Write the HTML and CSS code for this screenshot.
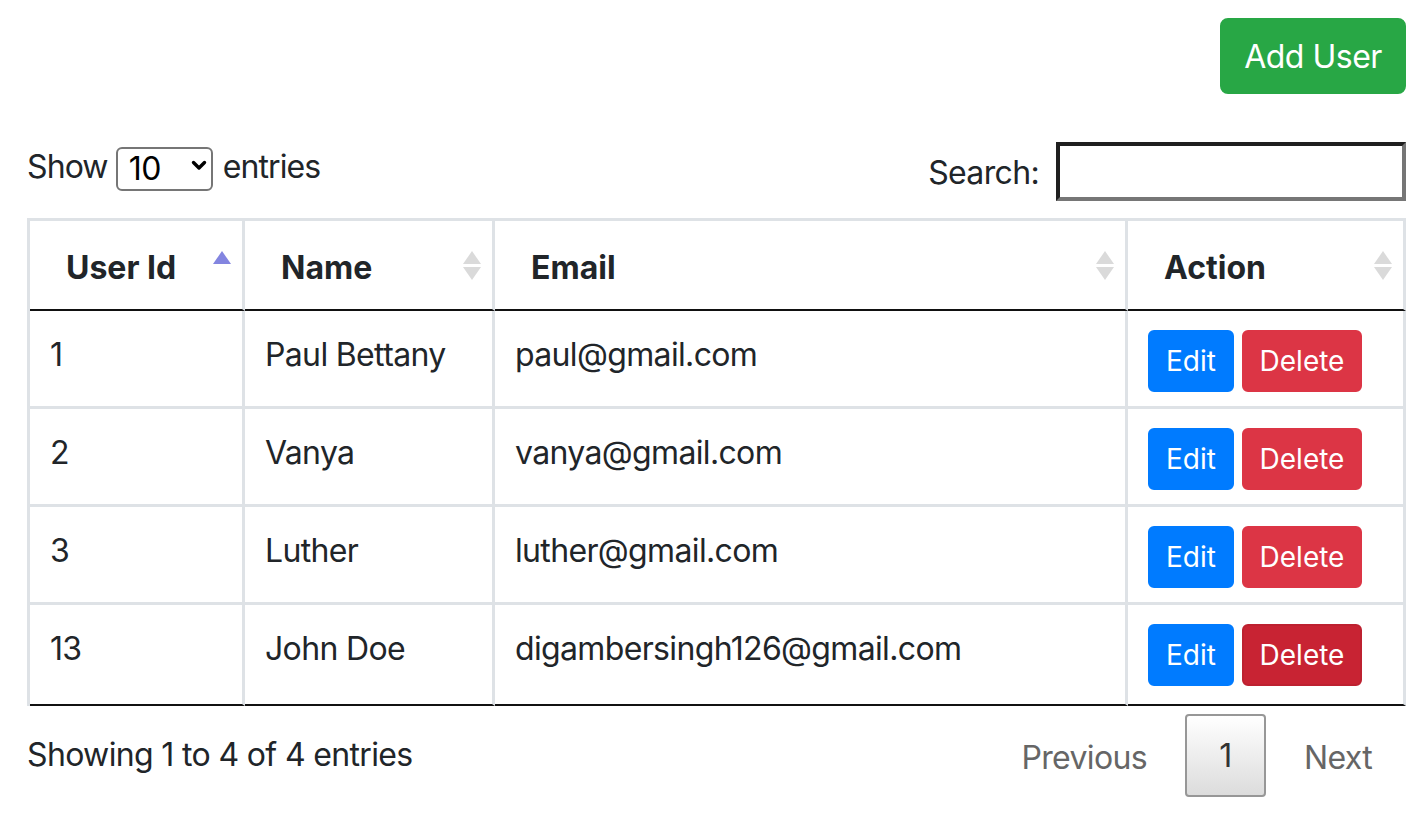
FILE: index.html
```html
<!DOCTYPE html>
<html lang="en">
<head>
<meta charset="utf-8">
<title>Users</title>
<link rel="stylesheet" href="styles.css">
</head>
<body>
<div class="page">
  <div class="top">
    <button class="btn btn-add">Add User</button>
  </div>
  <div class="controls">
    <label class="length">Show
      <span class="select-wrap">
        <select class="length-select"><option>10</option><option>25</option><option>50</option><option>100</option></select>
        <svg class="chev" width="16" height="11" viewBox="0 0 16 11"><path d="M2.5 2.5 L8 8 L13.5 2.5" fill="none" stroke="#000" stroke-width="3.4" stroke-linecap="round" stroke-linejoin="round"/></svg>
      </span>
      entries</label>
    <label class="filter">Search: <input class="search-input" type="search"></label>
  </div>
  <table class="users">
    <colgroup>
      <col class="c1"><col class="c2"><col class="c3"><col class="c4">
    </colgroup>
    <thead>
      <tr>
        <th><div class="th-in"><span>User Id</span>
          <svg class="sort" width="20" height="32" viewBox="0 0 20 32"><path d="M10 1 L19 14 L1 14 Z" fill="#8385e0"/></svg></div></th>
        <th><div class="th-in"><span>Name</span>
          <svg class="sort" width="20" height="32" viewBox="0 0 20 32"><path d="M10 1 L19 14 L1 14 Z" fill="#dadada"/><path d="M1 17 L19 17 L10 30 Z" fill="#dadada"/></svg></div></th>
        <th><div class="th-in"><span>Email</span>
          <svg class="sort" width="20" height="32" viewBox="0 0 20 32"><path d="M10 1 L19 14 L1 14 Z" fill="#dadada"/><path d="M1 17 L19 17 L10 30 Z" fill="#dadada"/></svg></div></th>
        <th><div class="th-in"><span>Action</span>
          <svg class="sort" width="20" height="32" viewBox="0 0 20 32"><path d="M10 1 L19 14 L1 14 Z" fill="#dadada"/><path d="M1 17 L19 17 L10 30 Z" fill="#dadada"/></svg></div></th>
      </tr>
    </thead>
    <tbody>
      <tr>
        <td>1</td><td>Paul Bettany</td><td>paul@gmail.com</td>
        <td class="act"><div class="acts"><button class="btn btn-sm btn-edit">Edit</button><button class="btn btn-sm btn-del">Delete</button></div></td>
      </tr>
      <tr>
        <td>2</td><td>Vanya</td><td>vanya@gmail.com</td>
        <td class="act"><div class="acts"><button class="btn btn-sm btn-edit">Edit</button><button class="btn btn-sm btn-del">Delete</button></div></td>
      </tr>
      <tr>
        <td>3</td><td>Luther</td><td>luther@gmail.com</td>
        <td class="act"><div class="acts"><button class="btn btn-sm btn-edit">Edit</button><button class="btn btn-sm btn-del">Delete</button></div></td>
      </tr>
      <tr>
        <td>13</td><td>John Doe</td><td>digambersingh126@gmail.com</td>
        <td class="act"><div class="acts"><button class="btn btn-sm btn-edit">Edit</button><button class="btn btn-sm btn-del btn-del-hover">Delete</button></div></td>
      </tr>
    </tbody>
  </table>
  <div class="footer">
    <div class="info">Showing 1 to 4 of 4 entries</div>
    <div class="paginate">
      <span class="pbtn disabled">Previous</span>
      <span class="pbtn current">1</span>
      <span class="pbtn disabled">Next</span>
    </div>
  </div>
</div>
</body>
</html>
```

FILE: styles.css
```css
html, body {
  margin: 0;
  padding: 0;
  background: #fff;
}
body {
  font-family: Inter, "Noto Sans", "Liberation Sans", sans-serif;
  font-size: 32px;
  line-height: 48px;
  letter-spacing: -0.65px;
  color: #212529;
}
.page {
  padding: 18px 16px 0 27px;
}
.top {
  display: flex;
  justify-content: flex-end;
}
.btn {
  font-family: inherit;
  border: 2px solid transparent;
  color: #fff;
  cursor: pointer;
  display: inline-flex;
  align-items: center;
  justify-content: center;
  box-sizing: border-box;
  white-space: nowrap;
}
.btn-add {
  width: 186px;
  height: 76px;
  font-size: 32px;
  letter-spacing: -0.5px;
  background: #28a745;
  border-color: #28a745;
  border-radius: 8px;
  padding: 0;
}
.controls {
  margin-top: 48px;
  display: flex;
  justify-content: space-between;
  align-items: flex-start;
}
.length {
  display: flex;
  align-items: center;
  height: 46px;
  margin-top: 2px;
  letter-spacing: -0.9px;
}
.select-wrap {
  position: relative;
  display: inline-block;
  width: 97px;
  height: 44px;
  margin: 0 10px 0 8px;
}
.length-select {
  appearance: none;
  -webkit-appearance: none;
  width: 97px;
  height: 44px;
  box-sizing: border-box;
  border: 2px solid #767676;
  border-radius: 6px;
  background: #fff;
  font-family: inherit;
  font-size: 32px;
  letter-spacing: -0.5px;
  color: #000;
  padding: 0 0 0 11px;
  margin: 0;
}
.chev {
  position: absolute;
  right: 6px;
  top: 15px;
  pointer-events: none;
}
.filter {
  display: flex;
  align-items: center;
  gap: 17px;
  padding-top: 2px;
}
.search-input {
  width: 350px;
  height: 59px;
  box-sizing: border-box;
  border-style: solid;
  border-width: 4px;
  border-color: #1f1f1f #767676 #767676 #1f1f1f;
  margin: -2px 0 0 0;
  padding: 2px 4px;
  font-family: inherit;
  font-size: 32px;
  background: #fff;
}
.users {
  margin-top: 17px;
  width: 1379px;
  table-layout: fixed;
  border-collapse: separate;
  border-spacing: 0;
  border-top: 3px solid #dee2e6;
  border-left: 3px solid #dee2e6;
}
.c1 { width: 215px; }
.c2 { width: 250px; }
.c3 { width: 633px; }
.c4 { width: 278px; }
.users th,
.users td {
  border-right: 3px solid #dee2e6;
  border-bottom: 3px solid #dee2e6;
  text-align: left;
  vertical-align: top;
}
.users th {
  padding: 23px 10px 17px 36px;
  border-bottom: 2px solid #111;
  font-weight: 700;
  letter-spacing: 0;
}
.th-in {
  display: flex;
  justify-content: space-between;
  align-items: center;
}
.sort {
  display: block;
  flex: none;
  margin-top: -4px;
}
.users td {
  padding: 20px 20px 12px 20px;
}
.users td.act {
  padding: 19px 20px 14px 20px;
}
.users tbody tr:last-child td {
  border-bottom: 2px solid #111;
}
.users tbody tr:last-child td.act {
  padding-bottom: 18px;
}
.acts {
  display: flex;
  gap: 8px;
}
.btn-sm {
  height: 62px;
  font-size: 28px;
  line-height: 42px;
  letter-spacing: 0;
  padding: 0;
  border-radius: 6px;
}
.btn-edit {
  width: 86px;
  background: #007bff;
  border-color: #007bff;
}
.btn-del {
  width: 120px;
  background: #dc3545;
  border-color: #dc3545;
}
.btn-del-hover {
  background: #c82333;
  border-color: #bd2130;
}
.footer {
  display: flex;
  justify-content: space-between;
  align-items: flex-start;
}
.info {
  padding-top: 25px;
}
.paginate {
  padding-top: 8px;
  display: flex;
  gap: 4px;
}
.pbtn {
  box-sizing: border-box;
  padding: 18px 32px;
  border: 2px solid transparent;
  border-radius: 4px;
  text-align: center;
  color: #666;
}
.pbtn.current {
  width: 81px;
  height: 83px;
  padding: 16px 0;
  color: #333;
  border-color: #979797;
  background: linear-gradient(to bottom, #ffffff 0%, #dcdcdc 100%);
}
```
